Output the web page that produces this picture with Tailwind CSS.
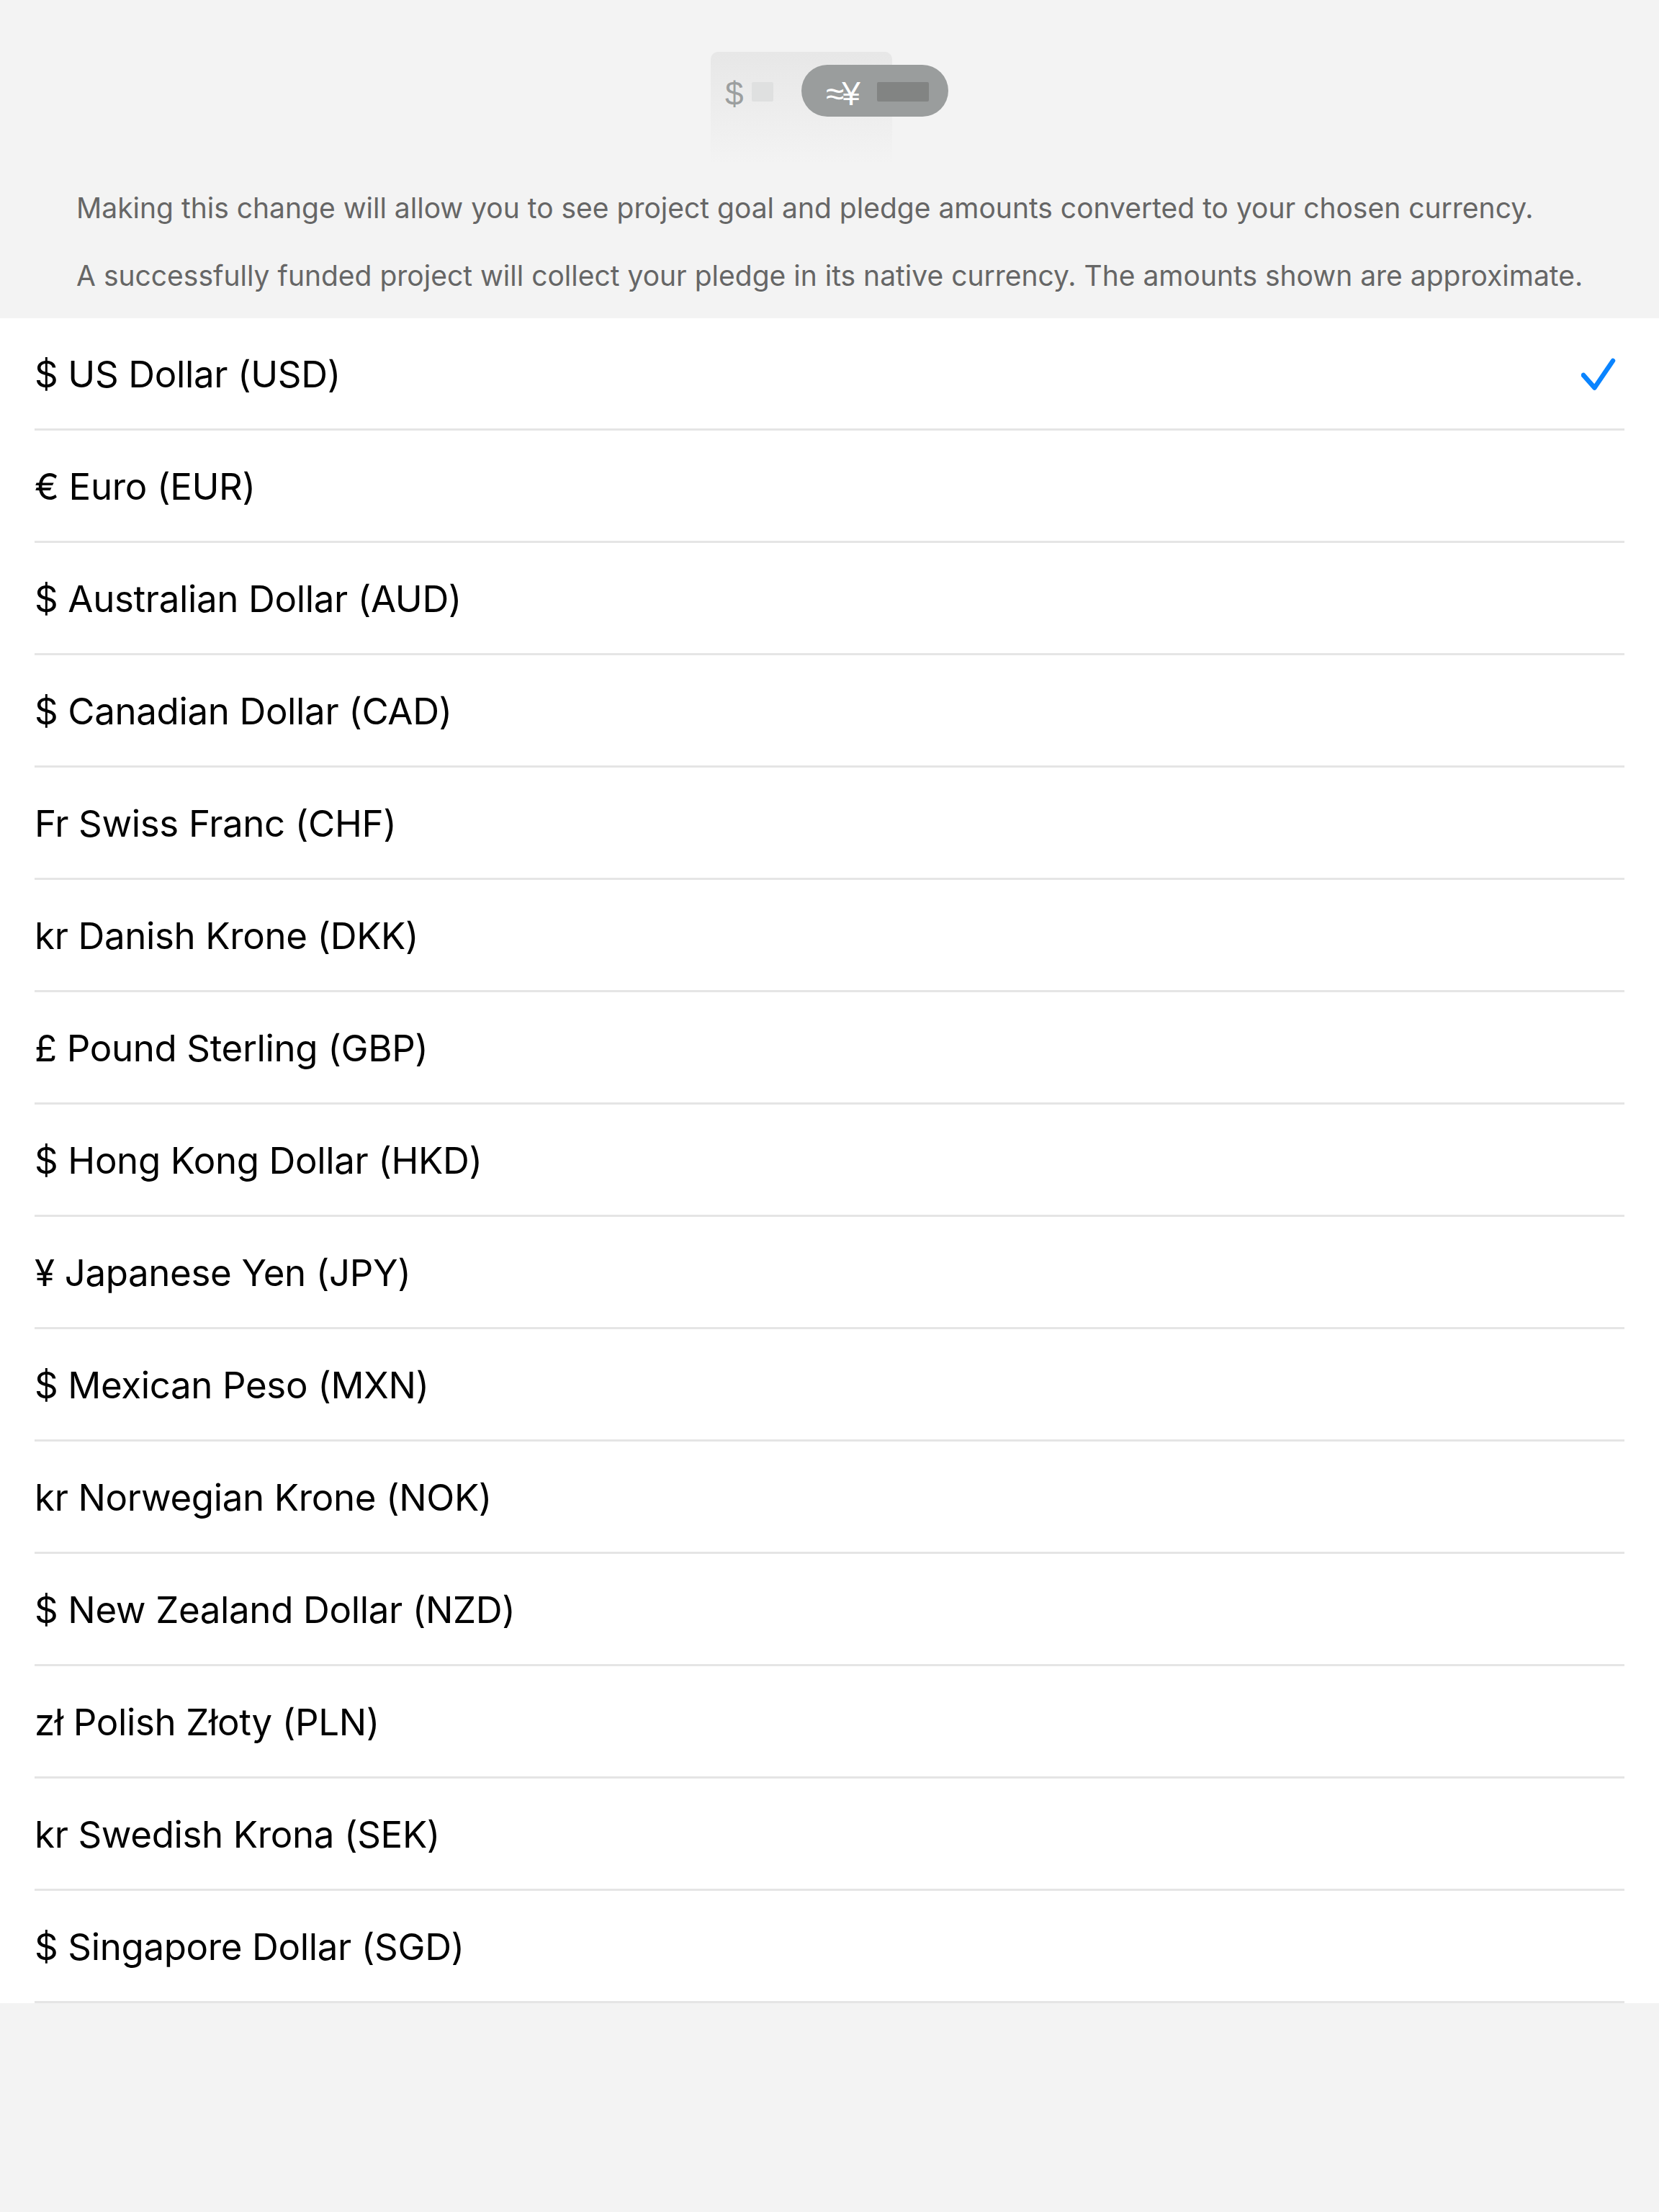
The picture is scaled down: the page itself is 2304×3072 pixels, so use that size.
<!DOCTYPE html>
<html>
<head>
<meta charset="utf-8">
<script src="https://cdn.jsdelivr.net/npm/@tailwindcss/browser@4"></script>
</head>
<body class="m-0 bg-[#f3f3f3] font-['Inter',sans-serif]">
<div class="w-[2304px] h-[3072px] flex flex-col">
  <header class="h-[442px] flex flex-col">
    <div class="relative h-[200px] shrink-0">
      <div class="absolute left-[987px] top-[72px] w-[252px] h-[156px] rounded-t-[10px] bg-gradient-to-b from-[#e7e7e7] to-[#f3f3f3]">
        <span class="absolute left-[20px] top-[35px] text-[46px] leading-[46px] text-[#9c9f9f] font-['Liberation_Sans',sans-serif]">$</span>
        <div class="absolute left-[57px] top-[42px] w-[30px] h-[27px] rounded-[2px] bg-[#dfe0e0]"></div>
      </div>
      <div class="absolute left-[1113px] top-[90px] w-[204px] h-[72px] rounded-full bg-[#9a9d9d]">
        <span class="absolute left-[34px] top-[17px] text-[46px] leading-[46px] text-white font-['Liberation_Sans',sans-serif] whitespace-nowrap tracking-[-3px]">≈¥</span>
        <div class="absolute left-[105px] top-[24px] w-[72px] h-[27px] rounded-[2px] bg-[#828483]"></div>
      </div>
    </div>
    <div class="pl-[106px] text-[#666666] text-[39px] leading-[48px] flex flex-col gap-[46px] mt-[65px] whitespace-nowrap">
      <p>Making this change will allow you to see project goal and pledge amounts converted to your chosen currency.</p>
      <p>A successfully funded project will collect your pledge in its native currency. The amounts shown are approximate.</p>
    </div>
  </header>
  <ul class="bg-white pl-[48px] pr-[48px] text-black text-[51px] tracking-[-0.36px]">
    <li class="h-[156px] pt-[4px] border-b-[3px] border-[#e5e5e5] flex items-center justify-between"><span>$ US Dollar (USD)</span>
      <svg class="mr-[12px]" width="48" height="48" viewBox="0 0 48 48" fill="none" stroke="#0a84ff" stroke-width="6.500" stroke-linecap="round" stroke-linejoin="round"><path d="M3 24 L18.500 41.500 L44 4"/></svg>
    </li>
    <li class="h-[156px] pt-[4px] border-b-[3px] border-[#e5e5e5] flex items-center">€ Euro (EUR)</li>
    <li class="h-[156px] pt-[4px] border-b-[3px] border-[#e5e5e5] flex items-center">$ Australian Dollar (AUD)</li>
    <li class="h-[156px] pt-[4px] border-b-[3px] border-[#e5e5e5] flex items-center">$ Canadian Dollar (CAD)</li>
    <li class="h-[156px] pt-[4px] border-b-[3px] border-[#e5e5e5] flex items-center">Fr Swiss Franc (CHF)</li>
    <li class="h-[156px] pt-[4px] border-b-[3px] border-[#e5e5e5] flex items-center">kr Danish Krone (DKK)</li>
    <li class="h-[156px] pt-[4px] border-b-[3px] border-[#e5e5e5] flex items-center">£ Pound Sterling (GBP)</li>
    <li class="h-[156px] pt-[4px] border-b-[3px] border-[#e5e5e5] flex items-center">$ Hong Kong Dollar (HKD)</li>
    <li class="h-[156px] pt-[4px] border-b-[3px] border-[#e5e5e5] flex items-center">¥ Japanese Yen (JPY)</li>
    <li class="h-[156px] pt-[4px] border-b-[3px] border-[#e5e5e5] flex items-center">$ Mexican Peso (MXN)</li>
    <li class="h-[156px] pt-[4px] border-b-[3px] border-[#e5e5e5] flex items-center">kr Norwegian Krone (NOK)</li>
    <li class="h-[156px] pt-[4px] border-b-[3px] border-[#e5e5e5] flex items-center">$ New Zealand Dollar (NZD)</li>
    <li class="h-[156px] pt-[4px] border-b-[3px] border-[#e5e5e5] flex items-center">zł Polish Złoty (PLN)</li>
    <li class="h-[156px] pt-[4px] border-b-[3px] border-[#e5e5e5] flex items-center">kr Swedish Krona (SEK)</li>
    <li class="h-[156px] pt-[4px] border-b-[3px] border-[#e5e5e5] flex items-center">$ Singapore Dollar (SGD)</li>
  </ul>
</div>
</body>
</html>
